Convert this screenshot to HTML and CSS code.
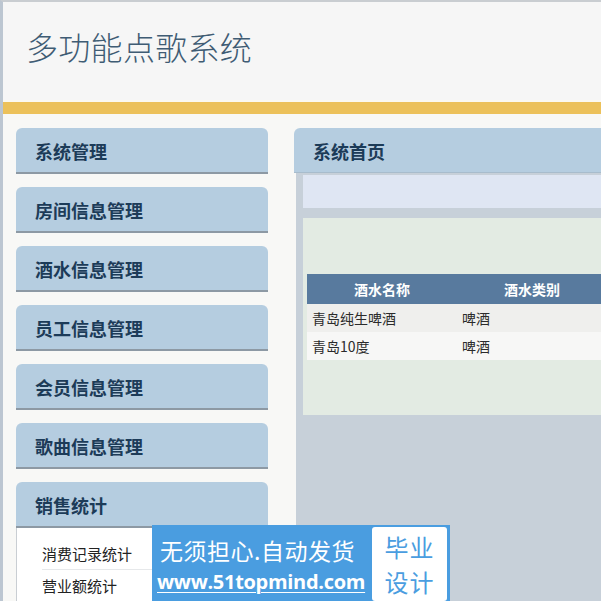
FILE: index.html
```html
<!DOCTYPE html>
<html lang="zh">
<head>
<meta charset="utf-8">
<title>多功能点歌系统</title>
<link rel="stylesheet" href="styles.css">
</head>
<body>
<div class="page">
  <header class="top">
    <h1 class="title">多功能点歌系统</h1>
  </header>
  <div class="bar"></div>
  <div class="main">
    <nav class="side">
      <div class="menu"><div class="menu-head">系统管理</div></div>
      <div class="menu"><div class="menu-head">房间信息管理</div></div>
      <div class="menu"><div class="menu-head">酒水信息管理</div></div>
      <div class="menu"><div class="menu-head">员工信息管理</div></div>
      <div class="menu"><div class="menu-head">会员信息管理</div></div>
      <div class="menu"><div class="menu-head">歌曲信息管理</div></div>
      <div class="menu open">
        <div class="menu-head">销售统计</div>
        <ul class="sub">
          <li>消费记录统计</li>
          <li>营业额统计</li>
        </ul>
      </div>
    </nav>
    <section class="panel">
      <div class="panel-head">系统首页</div>
      <div class="panel-body">
        <div class="info"></div>
        <div class="content">
          <table class="grid">
            <thead>
              <tr><th class="c1">酒水名称</th><th class="c2">酒水类别</th><th></th></tr>
            </thead>
            <tbody>
              <tr><td>青岛纯生啤酒</td><td>啤酒</td><td></td></tr>
              <tr class="alt"><td>青岛10度</td><td>啤酒</td><td></td></tr>
            </tbody>
          </table>
        </div>
      </div>
    </section>
  </div>
  <div class="ad">
    <div class="ad-text">
      <div class="ad-line1">无须担心.自动发货</div>
      <div class="ad-line2">www.51topmind.com</div>
    </div>
    <div class="ad-box">
      <div class="ad-word">毕业</div>
      <div class="ad-word">设计</div>
    </div>
  </div>
</div>
</body>
</html>
```

FILE: styles.css
```css
html, body {
  margin: 0;
  padding: 0;
  height: 100%;
  overflow: hidden;
}
body {
  background: #f8f8f6;
  font-family: "Noto Sans CJK SC", "Liberation Sans", sans-serif;
}
.page {
  position: relative;
  min-height: 601px;
  border-left: 3px solid #bcc6d1;
  border-top: 2px solid #c9cdd1;
  box-sizing: border-box;
  background: #f8f8f6;
}
.top {
  height: 98px;
  background: #f6f6f6;
  border-bottom: 2px solid #fbf9f1;
  display: flex;
  align-items: center;
  padding-left: 23px;
}
.title {
  margin: 0 0 10px 0;
  font-size: 32px;
  font-weight: 300;
  color: #3f5c74;
  letter-spacing: 0.3px;
}
.bar {
  height: 12px;
  background: #ecc15a;
}
.main {
  display: flex;
  gap: 26px;
  padding: 14px 0 0 13px;
}
.side {
  width: 252px;
  flex: none;
}
.menu {
  margin-bottom: 13px;
}
.menu-head {
  height: 44px;
  line-height: 46px;
  background: #b5cde0;
  border-bottom: 2px solid #8d99a4;
  border-radius: 6px 6px 0 0;
  padding-left: 19px;
  font-size: 18px;
  font-weight: 700;
  color: #1c3b58;
}
.sub {
  list-style: none;
  margin: 0;
  padding: 10px 0 0 25px;
  background: #ffffff;
  border-left: 1px solid #c9ced3;
  font-size: 15px;
  color: #222;
}
.sub li {
  height: 31px;
  line-height: 31px;
  border-bottom: 1px solid #e6e8ea;
}
.panel {
  flex: 1;
  min-width: 0;
}
.panel-head {
  height: 44px;
  line-height: 46px;
  background: #b5cde0;
  border-bottom: 1px solid #a8bccc;
  border-radius: 6px 0 0 0;
  padding-left: 19px;
  font-size: 18px;
  font-weight: 700;
  color: #1c3b58;
}
.panel-body {
  background: #c7d0d9;
  min-height: 440px;
  padding: 2px 0 0 7px;
  margin-left: 2px;
}
.info {
  height: 33px;
  background: #dfe6f3;
}
.content {
  margin-top: 10px;
  height: 197px;
  background: #e3ebe3;
  padding: 56px 0 0 4px;
  box-sizing: border-box;
}
.grid {
  border-collapse: collapse;
  width: 100%;
  table-layout: fixed;
  font-size: 14px;
}
.grid th {
  background: #587a9e;
  color: #ffffff;
  font-weight: 700;
  height: 30px;
  text-align: center;
  padding: 0;
}
.grid th.c1, .grid th.c2 {
  width: 150px;
}
.grid td {
  height: 28px;
  padding: 0 0 0 5px;
  color: #2b2b2b;
  background: #efefed;
  white-space: nowrap;
}
.grid tr.alt td {
  background: #f7f7f6;
}
.ad {
  position: absolute;
  left: 149px;
  top: 523px;
  width: 298px;
  height: 78px;
  background: #4a9de0;
  display: flex;
  align-items: center;
  box-sizing: border-box;
  padding: 2px 3px 2px 5px;
}
.ad-text {
  width: 215px;
  flex: none;
  color: #ffffff;
}
.ad-line1 {
  font-size: 23px;
  line-height: 34px;
  padding-left: 3px;
  letter-spacing: 0.5px;
  white-space: nowrap;
}
.ad-line2 {
  font-family: "Open Sans", "Liberation Sans", sans-serif;
  font-weight: 700;
  font-size: 20px;
  line-height: 28px;
  margin-top: 1px;
  text-decoration: underline;
  text-decoration-thickness: 1px;
  text-underline-offset: 3px;
  letter-spacing: -0.3px;
  white-space: nowrap;
}
.ad-box {
  flex: 1;
  align-self: stretch;
  background: #ffffff;
  border-radius: 3px;
  color: #4a9de0;
  display: flex;
  flex-direction: column;
  align-items: center;
  justify-content: center;
}
.ad-word {
  font-size: 24px;
  line-height: 35px;
  letter-spacing: 1px;
}
```
